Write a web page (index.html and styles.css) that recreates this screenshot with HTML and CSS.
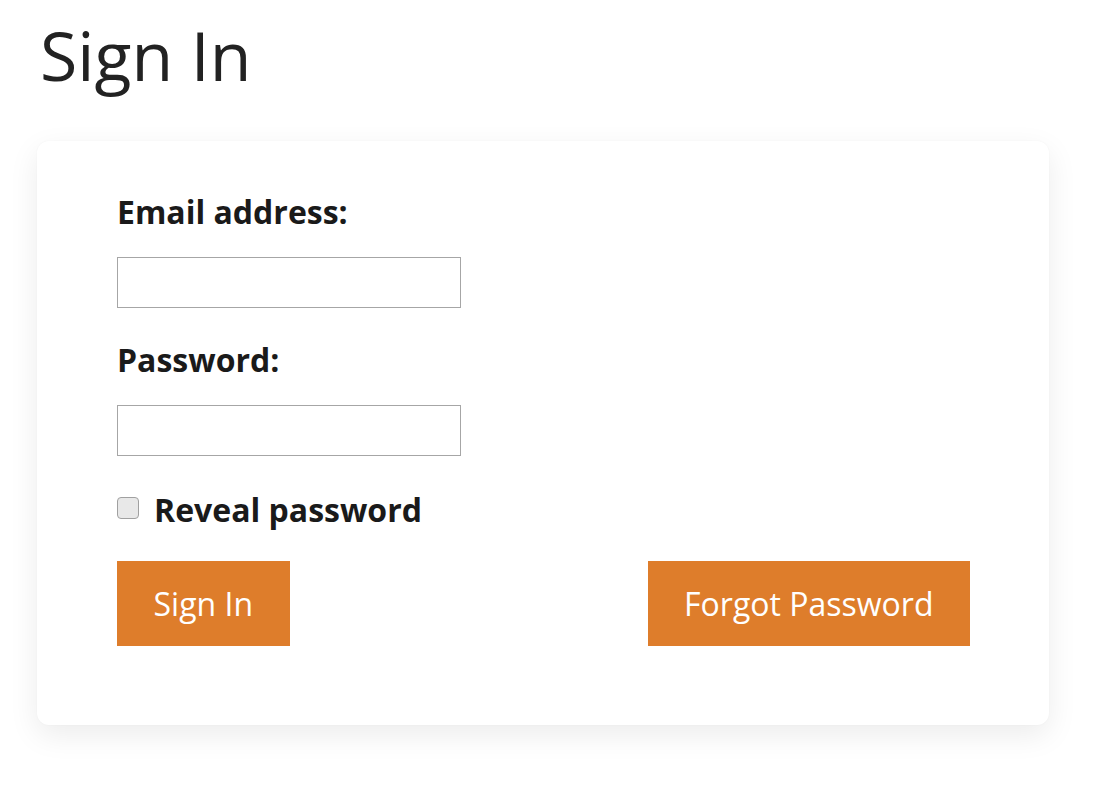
FILE: index.html
```html
<!DOCTYPE html>
<html lang="en">
<head>
<meta charset="utf-8">
<title>Sign In</title>
<link rel="stylesheet" href="styles.css">
</head>
<body>
<main class="page">
  <h1 class="title">Sign In</h1>
  <form class="card">
    <label class="field-label" for="email">Email address:</label>
    <input class="text-input" id="email" type="email">
    <label class="field-label field-label--spaced" for="password">Password:</label>
    <input class="text-input" id="password" type="password">
    <label class="reveal" for="reveal">
      <input class="check" id="reveal" type="checkbox">
      <span>Reveal password</span>
    </label>
    <div class="actions">
      <button class="btn" type="submit">Sign In</button>
      <button class="btn" type="button">Forgot Password</button>
    </div>
  </form>
</main>
</body>
</html>
```

FILE: styles.css
```css
* { box-sizing: border-box; }

html, body {
  margin: 0;
  background: #ffffff;
}

body {
  font-family: "Open Sans", "Noto Sans", sans-serif;
  color: #1f1f1f;
}

.page {
  padding: 10px 52px 40px 37px;
}

.title {
  margin: 0 0 41px 3px;
  font-size: 68px;
  line-height: 90px;
  font-weight: 400;
  color: #222222;
}

.card {
  width: 1012px;
  display: flex;
  flex-direction: column;
  align-items: flex-start;
  padding: 51px 79px 79px 80px;
  background: #ffffff;
  border-radius: 12px;
  box-shadow: 0 10px 30px rgba(0, 0, 0, 0.08), 0 0 2px rgba(0, 0, 0, 0.04);
}

.field-label {
  display: block;
  font-size: 32px;
  line-height: 40px;
  font-weight: 700;
  color: #1a1a1a;
  margin-bottom: 25px;
}

.field-label--spaced {
  margin-top: 32px;
}

.text-input {
  width: 344px;
  height: 51px;
  border: 1.5px solid #a6a6a6;
  border-radius: 0;
  background: #ffffff;
  margin: 0;
  padding: 0 8px;
  font: inherit;
  font-size: 26px;
}

.reveal {
  display: flex;
  align-items: center;
  gap: 15px;
  margin-top: 34px;
  font-size: 32px;
  line-height: 40px;
  font-weight: 700;
  color: #1a1a1a;
}

.check {
  appearance: none;
  -webkit-appearance: none;
  width: 22px;
  height: 22px;
  margin: -4px 0 0 0;
  border: 1.5px solid #a0a0a0;
  border-radius: 4px;
  background: #e8e8e8;
}

.actions {
  align-self: stretch;
  display: flex;
  justify-content: space-between;
  margin-top: 31px;
}

.btn {
  height: 85px;
  padding: 0 36.5px;
  border: none;
  border-radius: 0;
  background: #de7d2b;
  color: #ffffff;
  font: inherit;
  font-size: 32px;
  font-weight: 400;
  cursor: pointer;
}
```
